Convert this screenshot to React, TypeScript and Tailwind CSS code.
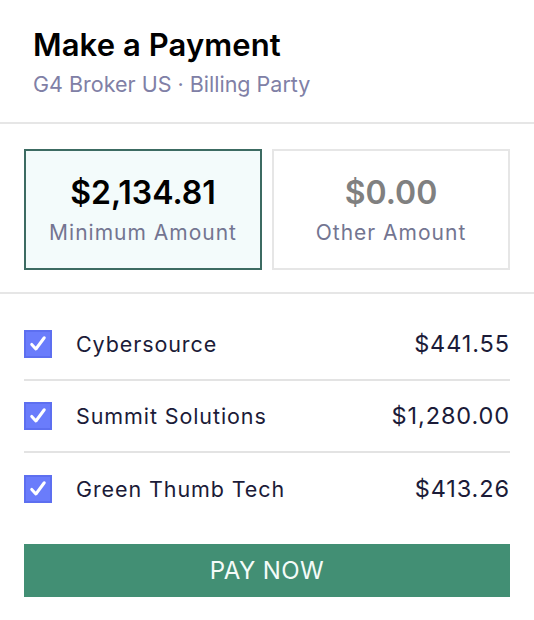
import { useState } from 'react';

const items = [
  { name: 'Cybersource', amount: '$441.55' },
  { name: 'Summit Solutions', amount: '$1,280.00' },
  { name: 'Green Thumb Tech', amount: '$413.26' },
];

function CheckBox({ checked, onChange }: { checked: boolean; onChange: () => void }) {
  return (
    <button
      onClick={onChange}
      className={
        checked
          ? 'w-[28px] h-[28px] flex items-center justify-center bg-[#6a7cfb] border-2 border-[#5d6ff0] shrink-0'
          : 'w-[28px] h-[28px] flex items-center justify-center bg-white border-2 border-[#c8c8d8] shrink-0'
      }
      aria-label="Toggle"
    >
      {checked && (
        <svg className="w-[20px] h-[20px]" viewBox="0 0 24 24" fill="none" stroke="white" strokeWidth={3.6} strokeLinecap="round" strokeLinejoin="round">
          <path d="M4.5 12.5l5 5.5L19.5 4.5" />
        </svg>
      )}
    </button>
  );
}

export default function App() {
  const [selected, setSelected] = useState<'min' | 'other'>('min');
  const [checked, setChecked] = useState([true, true, true]);

  return (
    <div className="w-[534px] h-[620px] bg-white font-['Inter',sans-serif]">
      {/* Header */}
      <div className="px-[33px] pt-[27px] h-[122px]">
        <h1 className="text-[31px] leading-[36px] font-semibold text-black tracking-[0.1px]">Make a Payment</h1>
        <p className="mt-[8px] text-[21.5px] leading-[26px] text-[#8080a6]">G4 Broker US · Billing Party</p>
      </div>
      <div className="h-[2px] bg-[#e6e6e6]" />

      {/* Amount options */}
      <div className="flex gap-[10px] px-[24px] pt-[25px] h-[168px]">
        {(['min', 'other'] as const).map((key) => (
          <button
            key={key}
            onClick={() => setSelected(key)}
            className={
              selected === key
                ? 'w-[238px] h-[121px] flex flex-col items-center justify-center border-2 border-[#3c6b62] bg-[#f3fbfb]'
                : 'w-[238px] h-[121px] flex flex-col items-center justify-center border-2 border-[#e6e6e6] bg-white'
            }
          >
            <span className={selected === key ? 'text-[32px] leading-[38px] font-semibold text-black' : 'text-[32px] leading-[38px] font-semibold text-[#808080]'}>
              {key === 'min' ? '$2,134.81' : '$0.00'}
            </span>
            <span className="mt-[8px] text-[21px] leading-[26px] text-[#737591] tracking-[1px]">
              {key === 'min' ? 'Minimum Amount' : 'Other Amount'}
            </span>
          </button>
        ))}
      </div>
      <div className="h-[2px] bg-[#e6e6e6]" />

      {/* Line items */}
      <div className="px-[24px] pt-[15px]">
        {items.map((item, i) => (
          <div
            key={item.name}
            className={i < items.length - 1 ? 'flex items-center h-[72px] border-b-2 border-[#e3e3e3]' : 'flex items-center h-[72px]'}
          >
            <CheckBox
              checked={checked[i]}
              onChange={() => setChecked(checked.map((c, j) => (j === i ? !c : c)))}
            />
            <span className="ml-[24px] flex-1 text-[21.5px] leading-[26px] text-[#1b1b38] tracking-[0.9px]">{item.name}</span>
            <span className="text-[23.5px] leading-[28px] text-[#1b1b38] tracking-[0.9px]">{item.amount}</span>
          </div>
        ))}
      </div>

      {/* Pay button */}
      <div className="px-[24px] pt-[19px]">
        <button className="w-full h-[53px] bg-[#428f74] text-[#f4fbf8] text-[24px] tracking-[0.4px] uppercase">Pay Now</button>
      </div>
    </div>
  );
}
